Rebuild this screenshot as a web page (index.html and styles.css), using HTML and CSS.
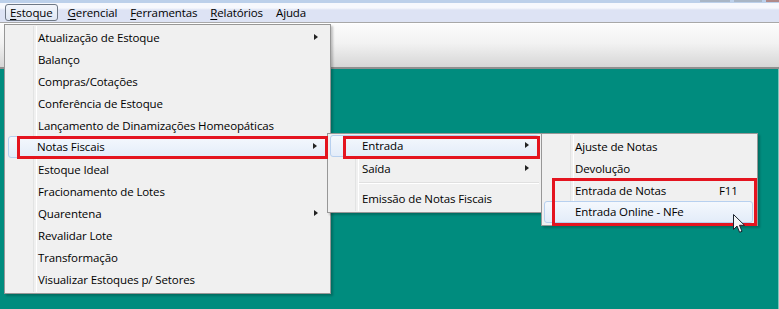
FILE: index.html
```html
<!DOCTYPE html>
<html lang="pt">
<head>
<meta charset="utf-8">
<title>Estoque</title>
<link rel="stylesheet" href="styles.css">
</head>
<body>
<div class="window">
  <div class="titlestrip">
    <span class="wbtn wbtn-a"></span><span class="wbtn wbtn-b"></span><span class="wbtn wbtn-c"></span>
  </div>
  <div class="menubar">
    <span class="mb-item active"><u>E</u>stoque</span>
    <span class="mb-item"><u>G</u>erencial</span>
    <span class="mb-item"><u>F</u>erramentas</span>
    <span class="mb-item"><u>R</u>elatórios</span>
    <span class="mb-item">Ajuda</span>
  </div>
  <div class="toolbar"></div>
  <div class="desk"></div>

  <div class="menu menu-main">
    <div class="mi sub">Atualização de Estoque</div>
    <div class="mi">Balanço</div>
    <div class="mi">Compras/Cotações</div>
    <div class="mi">Conferência de Estoque</div>
    <div class="mi">Lançamento de Dinamizações Homeopáticas</div>
    <div class="mi sub hl">Notas Fiscais</div>
    <div class="mi">Estoque Ideal</div>
    <div class="mi">Fracionamento de Lotes</div>
    <div class="mi sub">Quarentena</div>
    <div class="mi">Revalidar Lote</div>
    <div class="mi">Transformação</div>
    <div class="mi">Visualizar Estoques p/ Setores</div>
  </div>

  <div class="menu menu-nf">
    <div class="mi sub hl">Entrada</div>
    <div class="mi sub">Saída</div>
    <div class="sep"></div>
    <div class="mi">Emissão de Notas Fiscais</div>
  </div>

  <div class="menu menu-ent">
    <div class="mi">Ajuste de Notas</div>
    <div class="mi">Devolução</div>
    <div class="mi"><span class="lbl">Entrada de Notas</span><span class="key">F11</span></div>
    <div class="mi hl">Entrada Online - NFe</div>
  </div>

  <div class="redbox rb1"></div>
  <div class="redbox rb2"></div>
  <div class="redbox rb3"></div>

  <svg class="cursor" width="13" height="20" viewBox="0 0 13 20">
    <path d="M0.5 0.5 L0.5 15.5 L4 12 L6.6 18.3 L9 17.3 L6.5 11.3 L11.5 11.3 Z" fill="#f4f6f8" stroke="#1c2430" stroke-width="1" stroke-linejoin="round"/>
  </svg>
</div>
</body>
</html>
```

FILE: styles.css
```css
* { box-sizing: border-box; }
html, body { margin: 0; padding: 0; }
body {
  width: 779px;
  height: 309px;
  overflow: hidden;
  font-family: "Open Sans", "Noto Sans", sans-serif;
  font-size: 11.5px;
  letter-spacing: -0.12px;
  color: #000;
}
.window {
  position: relative;
  width: 779px;
  height: 309px;
  display: flex;
  flex-direction: column;
  background: #008c7e;
}
.titlestrip {
  height: 3px;
  background: #bcd0ea;
  position: relative;
}
.wbtn { position: absolute; top: 0; height: 2px; }
.wbtn-a { left: 700px; width: 30px; background: #a9b6c6; }
.wbtn-b { left: 734px; width: 28px; background: #a9b6c6; }
.wbtn-c { left: 766px; width: 13px; background: #b08a8a; }

.menubar {
  height: 20px;
  display: flex;
  align-items: center;
  padding-left: 5px;
  background: linear-gradient(#f6f8fd 0, #f6f8fd 5px, #dde3f4 7px, #dde3f4 100%);
  border-bottom: 1px solid #a8a8a8;
}
.mb-item {
  padding: 0 5px 0 6px;
  height: 17px;
  line-height: 16px;
  border: 1px solid transparent;
  border-radius: 3px;
}
.mb-item:first-child { padding-left: 4px; padding-right: 4px; }
.mb-item.active {
  border-color: #6e7784;
  background: linear-gradient(#f2f5fb, #dfe6f2);
  margin-right: 3px;
}
.mb-item u { text-decoration: underline; text-underline-offset: 2px; }

.toolbar {
  height: 46px;
  background: linear-gradient(#fcfcfc 0%, #f2f2f2 45%, #d6d6d6 100%);
  border-top: 1px solid #ffffff;
  border-bottom: 2px solid #8f8f8f;
}
.desk {
  flex: 1;
  background: #008c7e;
  border-right: 1px solid #7ec5bc;
}

.menu {
  position: absolute;
  background: #f0f0f0;
  border: 1px solid #979797;
  padding: 1px 2px 2px 1px;
  box-shadow: 2px 2px 2px rgba(0,0,0,0.22);
}
.menu::before {
  content: "";
  position: absolute;
  top: 1px;
  bottom: 1px;
  width: 2px;
  border-left: 1px solid #e2e3e3;
  border-right: 1px solid #ffffff;
}
.menu-main { left: 4px; top: 24px; width: 327px; height: 270px; }
.menu-main::before { left: 28px; }
.menu-nf { left: 327px; top: 133px; width: 215px; height: 80px; }
.menu-nf::before { left: 27px; }
.menu-ent { left: 541px; top: 133px; width: 217px; height: 93px; }
.menu-ent::before { left: 28px; }

.mi {
  position: relative;
  height: 22px;
  line-height: 21px;
  padding-top: 1px;
  padding-left: 32px;
  white-space: nowrap;
  display: flex;
}
.menu-nf .mi { padding-left: 33px; }
.menu-ent .mi { padding-left: 32px; }
.mi .lbl { width: 144px; }
.mi.sub::after {
  content: "";
  position: absolute;
  right: 10px;
  top: 8px;
  border-left: 4px solid #222;
  border-top: 3.5px solid transparent;
  border-bottom: 3.5px solid transparent;
}
.mi.hl {
  background: linear-gradient(#f4f8fd, #e3ecf9);
  border: 1px solid #b7d0ef;
  border-radius: 3px;
  padding-top: 0;
  line-height: 20px;
  margin-left: 1px;
}
.menu-main .mi.hl { margin-left: 2px; margin-right: 1px; padding-left: 28px; }
.menu-nf .mi.hl { margin-left: 1px; padding-left: 31px; }
.menu-ent .mi.hl { margin-left: 1px; margin-right: 2px; padding-left: 30px; }
.mi.hl.sub::after { right: 9px; top: 6px; }

.sep {
  height: 8px;
  position: relative;
}
.sep::after {
  content: "";
  position: absolute;
  left: 30px;
  right: 0;
  top: 3px;
  border-top: 1px solid #e0e0e0;
  border-bottom: 1px solid #ffffff;
}

.redbox {
  position: absolute;
  border: 3px solid #e4141f;
}
.rb1 { left: 17px; top: 136px; width: 311px; height: 23px; }
.rb2 { left: 343px; top: 136px; width: 197px; height: 23px; }
.rb3 { left: 552px; top: 178px; width: 205px; height: 48px; }

.cursor {
  position: absolute;
  left: 733px;
  top: 214px;
}
```
